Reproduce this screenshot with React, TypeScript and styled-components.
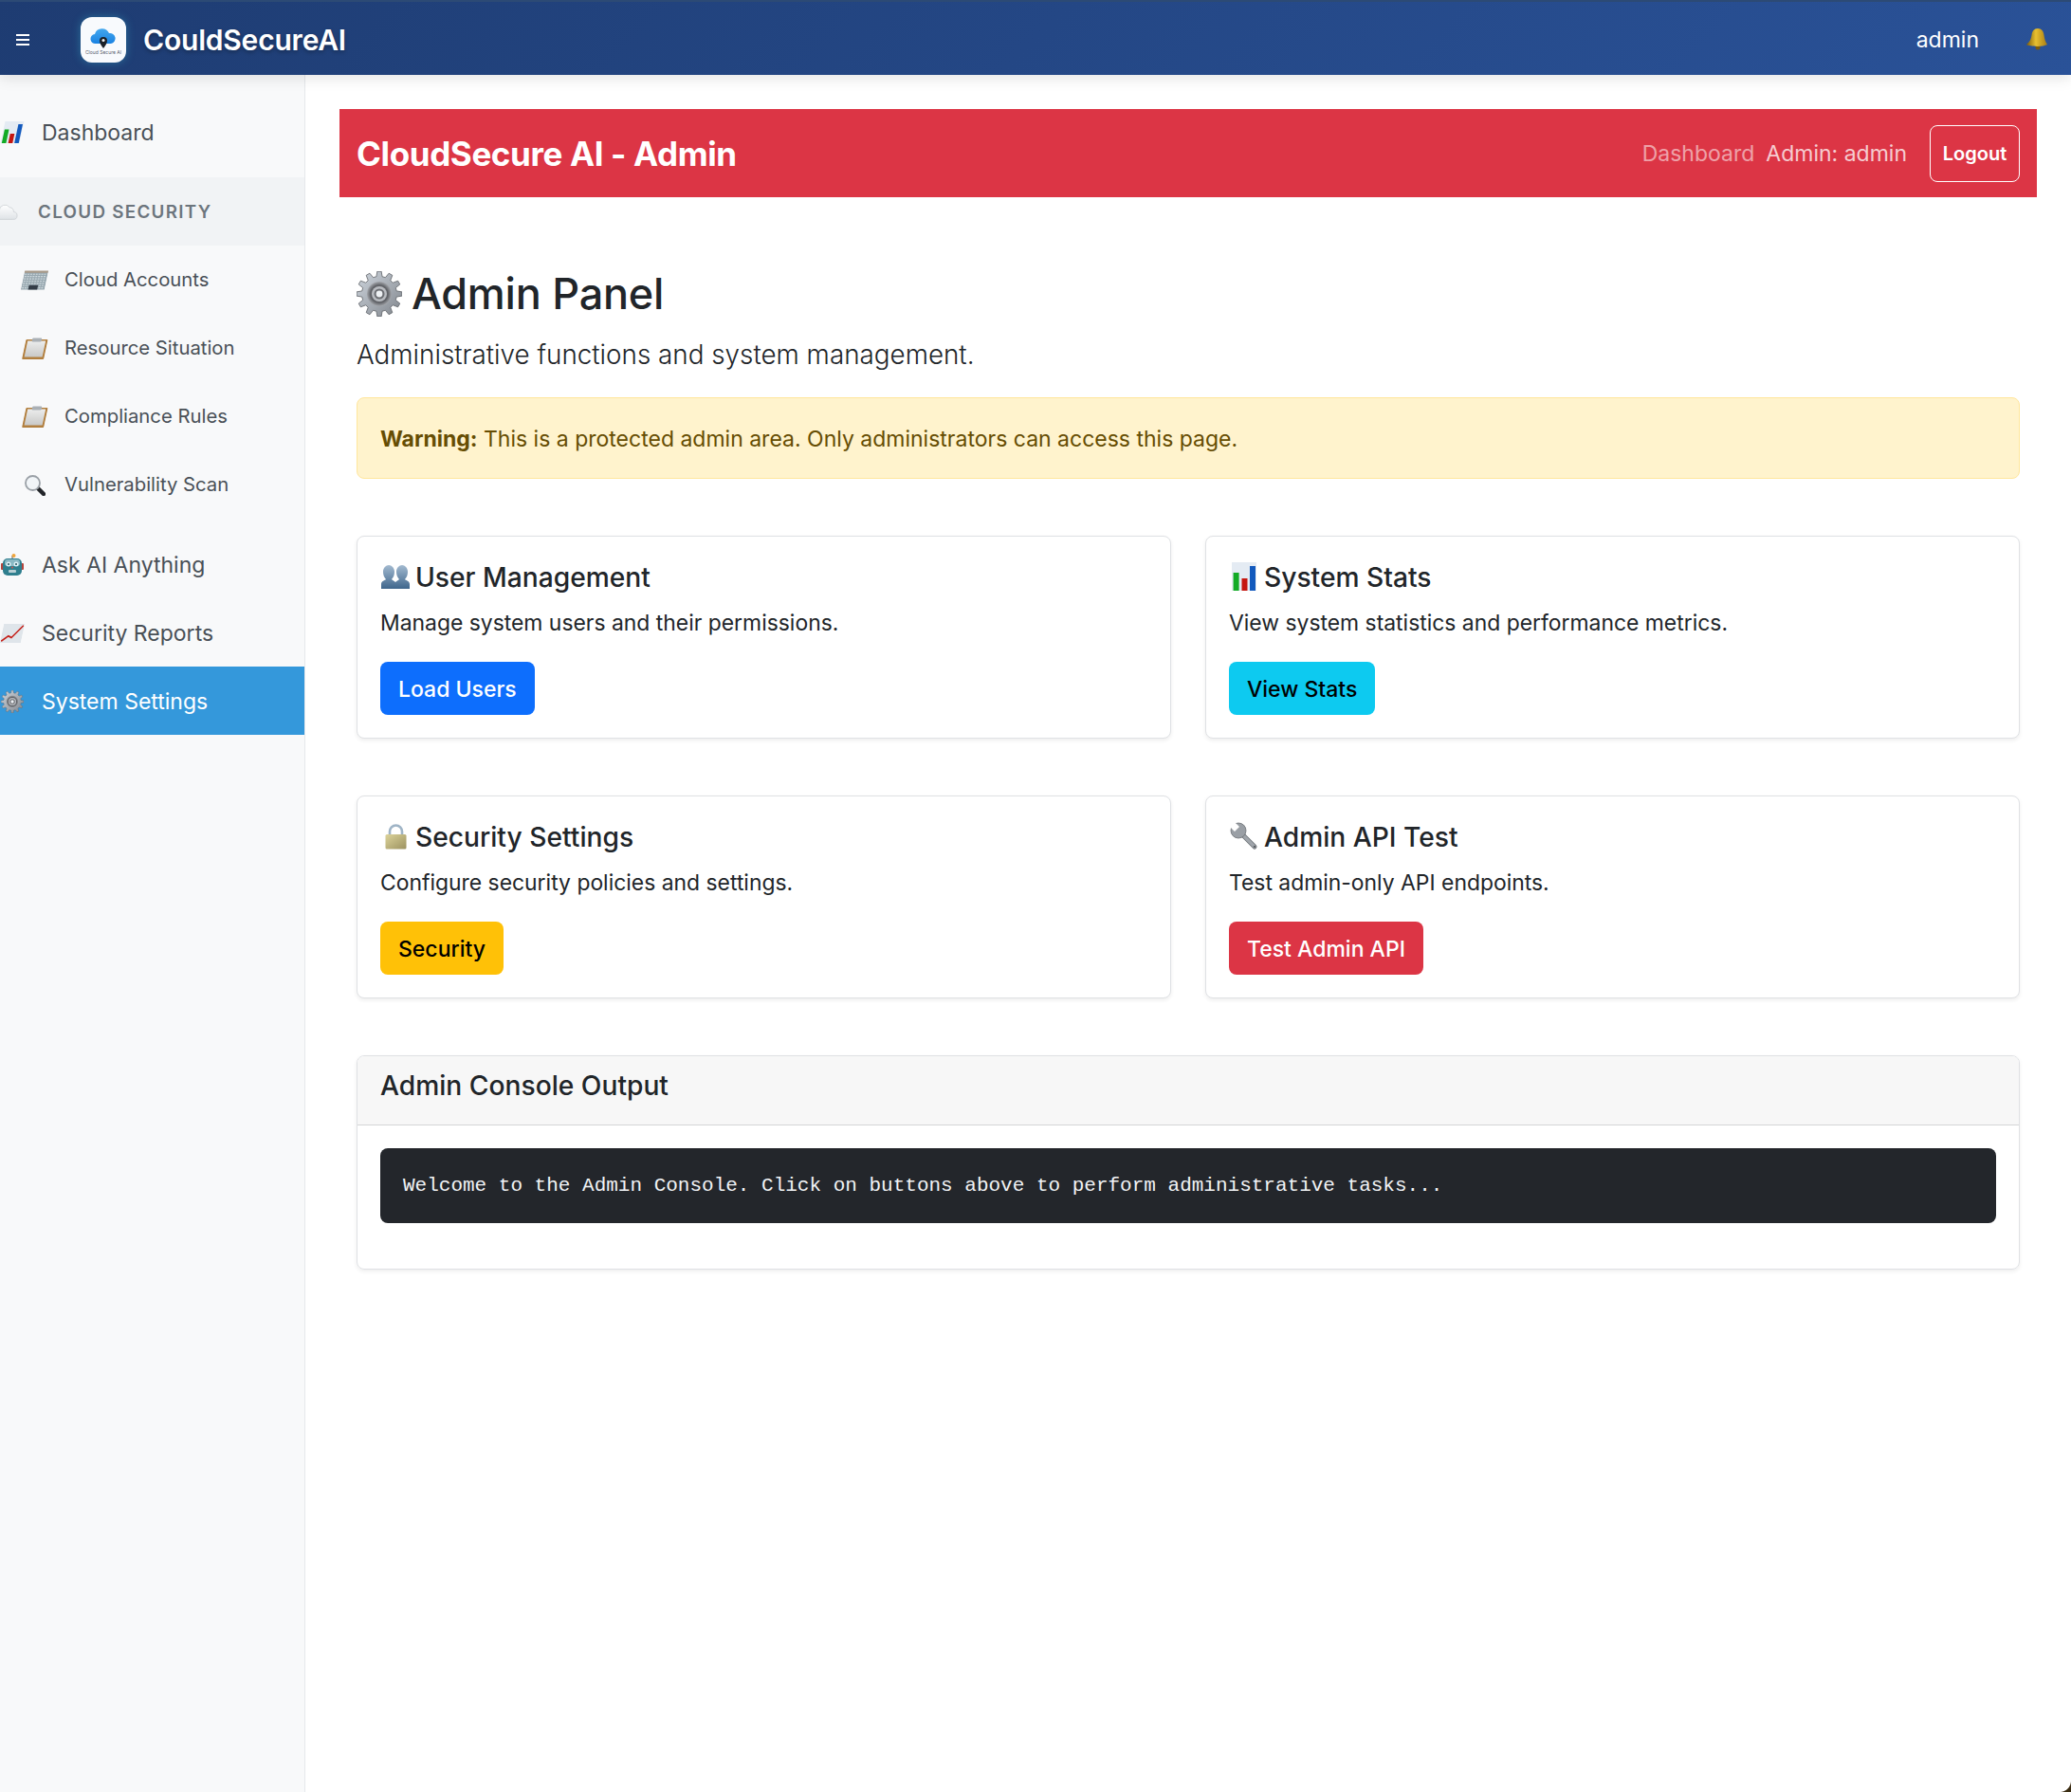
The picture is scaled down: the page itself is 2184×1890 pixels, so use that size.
import { PropsWithChildren, ReactNode } from "react";
import styled, { createGlobalStyle } from "styled-components";

const GlobalStyle = createGlobalStyle`
  html, body {
    margin: 0;
    padding: 0;
    background: #fff;
  }
  body {
    font-family: Inter, "Liberation Sans", sans-serif;
    color: #212529;
  }
  * { box-sizing: border-box; }
`;

const Page = styled("div")`
  position: relative;
  display: grid;
  grid-template-columns: 322px 1fr;
  grid-template-rows: 79px 1fr;
  width: 2184px;
  height: 1890px;
  overflow: hidden;
`;

const CornerMask = styled("div")`
  position: absolute;
  right: 0;
  bottom: 0;
  width: 12px;
  height: 12px;
  background: radial-gradient(circle at 0 0, transparent 11.5px, #3a2c12 12.5px);
`;

const Navbar = styled("header")`
  grid-column: 1 / 3;
  z-index: 2;
  display: flex;
  align-items: center;
  padding: 4px 24px 0 17px;
  background: linear-gradient(135deg, #1e3c72 0%, #2a5298 100%);
  box-shadow: inset 0 2px 0 #2c4a75, 0 4px 14px rgba(0, 0, 0, 0.1);
  color: #fff;
`;

const MenuButton = styled("div")`
  display: flex;
  width: 14px;
  height: 14px;
`;

const LogoTile = styled("div")`
  display: flex;
  flex-direction: column;
  align-items: center;
  width: 48px;
  height: 48px;
  margin-left: 54px;
  padding-top: 12px;
  border-radius: 12px;
  background: #f8fafd;
  box-shadow: 0 0 10px rgba(60, 200, 220, 0.35);
`;

const LogoCaption = styled("span")`
  margin-top: 1px;
  font-size: 5px;
  line-height: 6px;
  white-space: nowrap;
  color: #5a6270;
`;

const Brand = styled("span")`
  margin-left: 18px;
  font-size: 30px;
  font-weight: 600;
  letter-spacing: -0.2px;
  text-shadow: 0 2px 4px rgba(0, 0, 0, 0.3);
`;

const NavUser = styled("span")`
  margin-left: auto;
  font-size: 23px;
  font-weight: 400;
`;

const BellSlot = styled("span")`
  display: flex;
  margin-left: 49px;
  transform: translateY(-1px);
`;

const Sidebar = styled("nav")`
  overflow: hidden;
  padding-top: 24px;
  background: #f8f9fa;
  border-right: 1px solid #e6e8eb;
`;

const NavGroup = styled("div")`
  margin-bottom: 12px;
`;

const IconSlot = styled("span")<{ $slant?: boolean }>`
  display: flex;
  flex: none;
  justify-content: center;
  width: 25px;
  ${(p) => (p.$slant ? "transform: skewX(-12deg);" : "")}
`;

const CloudSlot = styled(IconSlot)`
  margin-left: -6px;
`;

const SideItem = styled("div")<{ $active?: boolean }>`
  display: flex;
  align-items: center;
  height: 72px;
  gap: 19px;
  padding-top: 1px;
  font-size: 23px;
  color: ${(p) => (p.$active ? "#fff" : "#495057")};
  background: ${(p) => (p.$active ? "#3498db" : "transparent")};
`;

const SubItem = styled("div")`
  display: flex;
  align-items: center;
  height: 72px;
  gap: 19px;
  padding: 0 0 2px 24px;
  font-size: 20.3px;
  color: #495057;

  ${IconSlot} {
    margin-top: 3px;
  }
`;

const SectionHead = styled("div")`
  display: flex;
  align-items: center;
  height: 72px;
  gap: 21px;
  font-size: 18.8px;
  font-weight: 600;
  letter-spacing: 1.3px;
  color: #6c757d;
  background: #f1f3f5;
`;

const Main = styled("main")`
  padding: 36px;
`;

const AdminBar = styled("div")`
  display: flex;
  align-items: center;
  height: 93px;
  padding: 0 18px;
  background: #dc3545;
  color: #fff;
`;

const AdminTitle = styled("span")`
  font-size: 35px;
  font-weight: 700;
  letter-spacing: -0.37px;
`;

const BarLink = styled("span")<{ $dim?: boolean }>`
  margin-left: ${(p) => (p.$dim ? "auto" : "12px")};
  font-size: 23px;
  color: rgba(255, 255, 255, ${(p) => (p.$dim ? 0.55 : 0.75)});
`;

const LogoutButton = styled("button")`
  height: 60px;
  width: 95px;
  margin-left: 24px;
  padding: 0;
  border: 1px solid #fff;
  border-radius: 8px;
  background: transparent;
  color: #fff;
  font: 600 20px Inter, sans-serif;
`;

const Content = styled("section")`
  padding: 0 18px;
`;

const Heading = styled("h1")`
  display: flex;
  align-items: center;
  gap: 10px;
  height: 56px;
  margin: 74px 0 0;
  font-size: 45px;
  font-weight: 500;
  line-height: 56px;
  letter-spacing: -0.25px;
`;

const Lead = styled("p")`
  margin: 16px 0 0;
  font-size: 27.8px;
  font-weight: 300;
  line-height: 40px;
`;

const Alert = styled("div")`
  display: flex;
  align-items: center;
  height: 86px;
  margin-top: 25px;
  padding: 2px 24px 0;
  border: 1px solid #ffe69c;
  border-radius: 8px;
  background: #fff3cd;
  color: #664d03;
  font-size: 23px;
  white-space: pre;
`;

const AlertLabel = styled("strong")`
  font-weight: 700;
`;

const CardGrid = styled("div")`
  display: grid;
  grid-template-columns: 1fr 1fr;
  gap: 60px 36px;
  margin-top: 60px;
`;

const Card = styled("article")`
  height: 214px;
  padding: 22px 24px 24px;
  border: 1px solid #dfe1e4;
  border-radius: 8px;
  background: #fff;
  box-shadow: 0 2px 4px rgba(0, 0, 0, 0.07);
`;

const CardTitle = styled("h5")`
  display: flex;
  align-items: center;
  height: 40px;
  margin: 0;
  padding-top: 2px;
  font-size: 28.2px;
  font-weight: 500;
  line-height: 38px;
`;

const TitleIcon = styled("span")`
  display: flex;
  flex: none;
  justify-content: center;
  width: 32px;
  margin: -2px 5px 0 0;
`;

const CardText = styled("p")`
  height: 34px;
  margin: 12px 0 24px;
  font-size: 22.9px;
  line-height: 34px;
`;

const ActionButton = styled("button")<{ $bg: string; $fg: string }>`
  height: 56px;
  padding: 2px 19px 0;
  border: 0;
  border-radius: 8px;
  background: ${(p) => p.$bg};
  color: ${(p) => p.$fg};
  font: 500 23px Inter, sans-serif;
`;

const ConsoleCard = styled("article")`
  height: 226px;
  margin-top: 60px;
  border: 1px solid #dfe1e4;
  border-radius: 8px;
  box-shadow: 0 2px 4px rgba(0, 0, 0, 0.07);
  overflow: hidden;
`;

const ConsoleHeader = styled("h5")`
  display: flex;
  align-items: center;
  height: 73px;
  margin: 0;
  padding: 0 24px 10px;
  border-bottom: 1px solid #d4d5d6;
  background: #f7f7f7;
  font-size: 28.2px;
  font-weight: 500;
`;

const ConsoleBody = styled("div")`
  padding: 24px;
`;

const ConsoleOutput = styled("pre")`
  display: flex;
  align-items: center;
  height: 79px;
  margin: 0;
  padding: 0 24px;
  border-radius: 8px;
  background: #23262b;
  color: #f1f3f5;
  font-family: "Liberation Mono", monospace;
  font-size: 21px;
`;

function Svg({ w, h, view, children }: PropsWithChildren<{ w: number; h: number; view: string }>) {
  return (
    <svg width={w} height={h} viewBox={view} aria-hidden="true">
      {children}
    </svg>
  );
}

const gearPath = (teeth: number, outer: number, inner: number) => {
  const step = (Math.PI * 2) / teeth;
  let d = "";
  for (let i = 0; i < teeth; i++) {
    const a = i * step;
    const pts: [number, number][] = [
      [inner, a - step * 0.32],
      [outer, a - step * 0.17],
      [outer, a + step * 0.17],
      [inner, a + step * 0.32],
    ];
    pts.forEach(([r, t]) => {
      d += `${d ? "L" : "M"}${(24 + r * Math.cos(t)).toFixed(2)} ${(24 + r * Math.sin(t)).toFixed(2)}`;
    });
  }
  return d + "Z";
};

function GearIcon({ size }: { size: number }) {
  return (
    <Svg w={size} h={size} view="0 0 48 48">
      <defs>
        <linearGradient id="gearBody" x1="0" y1="0" x2="1" y2="1">
          <stop offset="0" stopColor="#cfd6de" />
          <stop offset="1" stopColor="#80858c" />
        </linearGradient>
        <radialGradient id="gearHub">
          <stop offset="0" stopColor="#8d8f94" />
          <stop offset="0.7" stopColor="#5f6166" />
          <stop offset="1" stopColor="#a5a8ad" />
        </radialGradient>
      </defs>
      <path d={gearPath(12, 24, 18.5)} fill="url(#gearBody)" stroke="#5c5f64" strokeWidth="0.8" />
      <circle cx="24" cy="24" r="13" fill="url(#gearHub)" />
      <circle cx="24" cy="24" r="8" fill="#b9bcc1" />
      <circle cx="24" cy="24" r="5.5" fill="#6c6e73" />
      <circle cx="24" cy="24" r="3.4" fill="#eef1f4" />
    </Svg>
  );
}

function ChartIcon({ w, h }: { w: number; h: number }) {
  return (
    <Svg w={w} h={h} view="0 0 26 30">
      <rect width="26" height="30" fill="#e4ebf3" />
      <rect x="1.600" y="11" width="6" height="19" fill="#12ab25" />
      <rect x="10.500" y="17" width="6" height="13" fill="#c5160f" />
      <rect x="19" y="4" width="6" height="26" fill="#1259bd" />
    </Svg>
  );
}

function CloudEmoji() {
  return (
    <Svg w={25} h={17} view="0 0 40 28">
      <defs>
        <linearGradient id="cloudFill" x1="0" x2="0" y1="0" y2="1">
          <stop offset="0" stopColor="#ffffff" />
          <stop offset="1" stopColor="#dfe3e7" />
        </linearGradient>
      </defs>
      <path
        d="M9 27a8 8 0 0 1-1-16 10 10 0 0 1 18-5 8 8 0 0 1 7 8 6.500 6.500 0 0 1-1 13Z"
        fill="url(#cloudFill)"
        stroke="#c9cdd2"
        strokeWidth="1.2"
      />
    </Svg>
  );
}

function BuildingIcon() {
  return (
    <Svg w={26} h={21} view="0 0 26 21">
      <rect y="1" width="26" height="20" fill="#98a8b0" />
      <rect y="0" width="26" height="2.500" fill="#a89a8a" />
      {[4, 6.500, 9, 11.500, 14, 16.500, 19].map((y) => (
        <path key={y} d={`M1 ${y}H25`} stroke="#d0dade" strokeWidth="1.200" strokeDasharray="2 1" />
      ))}
      <rect x="8" y="16" width="10" height="5" fill="#333d47" />
    </Svg>
  );
}

function ClipboardIcon() {
  return (
    <Svg w={24} h={23} view="0 0 24 23">
      <defs>
        <linearGradient id="clipPaper" x1="0" x2="0" y1="0" y2="1">
          <stop offset="0" stopColor="#eceded" />
          <stop offset="1" stopColor="#c9c9c7" />
        </linearGradient>
      </defs>
      <rect x="0.500" y="2" width="23" height="21" rx="1" fill="#b27f3e" />
      <rect x="2.500" y="3.500" width="19" height="17" fill="url(#clipPaper)" />
      <rect x="7" y="0.500" width="10" height="4" rx="1" fill="#aab0b5" />
    </Svg>
  );
}

function MagnifierIcon() {
  return (
    <Svg w={22} h={22} view="0 0 22 22">
      <path d="M14 14l6 6" stroke="#23262a" strokeWidth="4.500" strokeLinecap="round" />
      <circle cx="8.500" cy="8.500" r="7.500" fill="#f1f5f8" stroke="#9aa0a6" strokeWidth="1.800" />
    </Svg>
  );
}

function RobotIcon() {
  return (
    <Svg w={24} h={24} view="0 0 24 24">
      <rect x="0" y="10" width="3" height="7" rx="1" fill="#b5453c" />
      <rect x="21" y="10" width="3" height="7" rx="1" fill="#b5453c" />
      <path d="M12 5V2" stroke="#8a8d90" strokeWidth="1.500" />
      <circle cx="13.500" cy="2" r="2" fill="#f0a63c" />
      <rect x="2" y="5" width="20" height="18" rx="5" fill="#2f7f8e" />
      <rect x="4" y="6" width="16" height="7" rx="3" fill="#8ab9c4" />
      <circle cx="8" cy="11" r="2.500" fill="#dff2f7" />
      <circle cx="16" cy="11" r="2.500" fill="#dff2f7" />
      <circle cx="8" cy="11" r="1" fill="#20505c" />
      <circle cx="16" cy="11" r="1" fill="#20505c" />
      <rect x="8" y="17" width="8" height="3" rx="1" fill="#b9d0d5" />
      <circle cx="12" cy="14.500" r="1" fill="#d8544a" />
    </Svg>
  );
}

function TrendIcon() {
  return (
    <Svg w={22} h={22} view="0 0 24 22">
      <rect width="24" height="22" fill="#dfe5ea" />
      <path d="M1 20l7-6 4 2L23 2" fill="none" stroke="#c5211a" strokeWidth="1.800" />
    </Svg>
  );
}

function BellIcon() {
  return (
    <Svg w={24} h={24} view="0 0 24 24">
      <defs>
        <linearGradient id="bellBody" x1="0" x2="1" y1="0" y2="0">
          <stop offset="0" stopColor="#7a5a0a" />
          <stop offset="0.45" stopColor="#e8c030" />
          <stop offset="1" stopColor="#a87c14" />
        </linearGradient>
      </defs>
      <circle cx="13" cy="21" r="2.500" fill="#7a5a0c" />
      <path d="M13 1c-4 0-6 3-6.500 7-.5 4-2 7-5.500 10 3 2 17 3 22 0-2-3-3-6-3.500-10C19 4 17 1 13 1Z" fill="url(#bellBody)" />
    </Svg>
  );
}

function UsersIcon() {
  return (
    <Svg w={30} h={25} view="0 0 30 25">
      <defs>
        <linearGradient id="usersFill" x1="0" x2="0" y1="0" y2="1">
          <stop offset="0" stopColor="#a3bad0" />
          <stop offset="1" stopColor="#3f668c" />
        </linearGradient>
      </defs>
      <path d="M0 25v-5c0-3 4-4 5-5-2-2-3-5-3-8 0-4 3-7 6-7s6 3 6 7c0 3-1 6-3 8 1 1 3 2 4 3V25Z" fill="url(#usersFill)" />
      <path d="M15 25v-7c1-1 3-2 4-3-2-2-3-5-3-8 0-4 3-7 6-7s6 3 6 7c0 3-1 6-3 8 1 1 5 2 5 5v5Z" fill="url(#usersFill)" />
    </Svg>
  );
}

function LockIcon() {
  return (
    <Svg w={23} h={27} view="0 0 23 27">
      <defs>
        <linearGradient id="lockBody" x1="0" x2="1" y1="0" y2="1">
          <stop offset="0" stopColor="#dcd39a" />
          <stop offset="1" stopColor="#9c9260" />
        </linearGradient>
      </defs>
      <path d="M5 12V8a6.500 6.500 0 0 1 13 0v4" fill="none" stroke="#9fb4c6" strokeWidth="2.600" />
      <rect x="0.500" y="11" width="22" height="15.500" rx="1.500" fill="url(#lockBody)" />
    </Svg>
  );
}

function WrenchIcon() {
  return (
    <Svg w={30} h={30} view="0 0 30 30">
      <path d="M11 11 26 26" stroke="#6c7075" strokeWidth="5" strokeLinecap="round" />
      <path d="M11 11 26 26" stroke="#a0a5ab" strokeWidth="3.400" strokeLinecap="round" />
      <circle cx="9" cy="9" r="8" fill="#9a9fa5" stroke="#6c7075" strokeWidth="0.800" />
      <path d="M0 5 5 10 10 5 5 0Z" fill="#fff" />
      <circle cx="26" cy="26" r="1.100" fill="#4d5055" />
    </Svg>
  );
}

function LogoMark() {
  return (
    <Svg w={28} h={21} view="0 0 28 21">
      <defs>
        <linearGradient id="logoCloud" x1="0" x2="0" y1="0" y2="1">
          <stop offset="0" stopColor="#43a7ee" />
          <stop offset="1" stopColor="#1a82e2" />
        </linearGradient>
      </defs>
      <path d="M6 16a5 5 0 0 1-1-10 8 8 0 0 1 15-1 5.500 5.500 0 0 1 2 11Z" fill="url(#logoCloud)" />
      <path d="M14 21c-2-3-4-5-4-8a4 4 0 0 1 8 0c0 3-2 5-4 8Z" fill="#1c2128" />
      <circle cx="14" cy="12.500" r="1.500" fill="#f4f6f8" />
    </Svg>
  );
}

type Action = {
  icon: ReactNode;
  title: string;
  text: string;
  label: string;
  bg: string;
  fg: string;
};

const actions: Action[] = [
  {
    icon: <UsersIcon />,
    title: "User Management",
    text: "Manage system users and their permissions.",
    label: "Load Users",
    bg: "#0d6efd",
    fg: "#fff",
  },
  {
    icon: <ChartIcon w={26} h={30} />,
    title: "System Stats",
    text: "View system statistics and performance metrics.",
    label: "View Stats",
    bg: "#0dcaf0",
    fg: "#000",
  },
  {
    icon: <LockIcon />,
    title: "Security Settings",
    text: "Configure security policies and settings.",
    label: "Security",
    bg: "#ffc107",
    fg: "#000",
  },
  {
    icon: <WrenchIcon />,
    title: "Admin API Test",
    text: "Test admin-only API endpoints.",
    label: "Test Admin API",
    bg: "#dc3545",
    fg: "#fff",
  },
];

const subItems = [
  { icon: <BuildingIcon />, label: "Cloud Accounts" },
  { icon: <ClipboardIcon />, label: "Resource Situation" },
  { icon: <ClipboardIcon />, label: "Compliance Rules" },
  { icon: <MagnifierIcon />, label: "Vulnerability Scan" },
];

export default function App() {
  return (
    <Page>
      <GlobalStyle />
      <Navbar>
        <MenuButton>
          <Svg w={14} h={14} view="0 0 14 14">
            <path d="M0 2h14M0 7h14M0 12h14" stroke="#fff" strokeWidth="2" />
          </Svg>
        </MenuButton>
        <LogoTile>
          <LogoMark />
          <LogoCaption>Cloud Secure AI</LogoCaption>
        </LogoTile>
        <Brand>CouldSecureAI</Brand>
        <NavUser>admin</NavUser>
        <BellSlot>
          <BellIcon />
        </BellSlot>
      </Navbar>

      <Sidebar>
        <NavGroup>
          <SideItem>
            <IconSlot $slant>
              <ChartIcon w={22} h={23} />
            </IconSlot>
            Dashboard
          </SideItem>
        </NavGroup>
        <NavGroup>
          <SectionHead>
            <CloudSlot>
              <CloudEmoji />
            </CloudSlot>
            CLOUD SECURITY
          </SectionHead>
          {subItems.map((item) => (
            <SubItem key={item.label}>
              <IconSlot $slant={item.label !== "Vulnerability Scan"}>{item.icon}</IconSlot>
              {item.label}
            </SubItem>
          ))}
        </NavGroup>
        <SideItem>
          <IconSlot>
            <RobotIcon />
          </IconSlot>
          Ask AI Anything
        </SideItem>
        <SideItem>
          <IconSlot $slant>
            <TrendIcon />
          </IconSlot>
          Security Reports
        </SideItem>
        <SideItem $active>
          <IconSlot>
            <GearIcon size={24} />
          </IconSlot>
          System Settings
        </SideItem>
      </Sidebar>

      <Main>
        <AdminBar>
          <AdminTitle>CloudSecure AI - Admin</AdminTitle>
          <BarLink $dim>Dashboard</BarLink>
          <BarLink>Admin: admin</BarLink>
          <LogoutButton>Logout</LogoutButton>
        </AdminBar>
        <Content>
          <Heading>
            <GearIcon size={48} />
            Admin Panel
          </Heading>
          <Lead>Administrative functions and system management.</Lead>
          <Alert>
            <AlertLabel>Warning:</AlertLabel> This is a protected admin area. Only administrators can access this page.
          </Alert>
          <CardGrid>
            {actions.map((a) => (
              <Card key={a.title}>
                <CardTitle>
                  <TitleIcon>{a.icon}</TitleIcon>
                  {a.title}
                </CardTitle>
                <CardText>{a.text}</CardText>
                <ActionButton $bg={a.bg} $fg={a.fg}>
                  {a.label}
                </ActionButton>
              </Card>
            ))}
          </CardGrid>
          <ConsoleCard>
            <ConsoleHeader>Admin Console Output</ConsoleHeader>
            <ConsoleBody>
              <ConsoleOutput>
                Welcome to the Admin Console. Click on buttons above to perform administrative tasks...
              </ConsoleOutput>
            </ConsoleBody>
          </ConsoleCard>
        </Content>
      </Main>
      <CornerMask />
    </Page>
  );
}
